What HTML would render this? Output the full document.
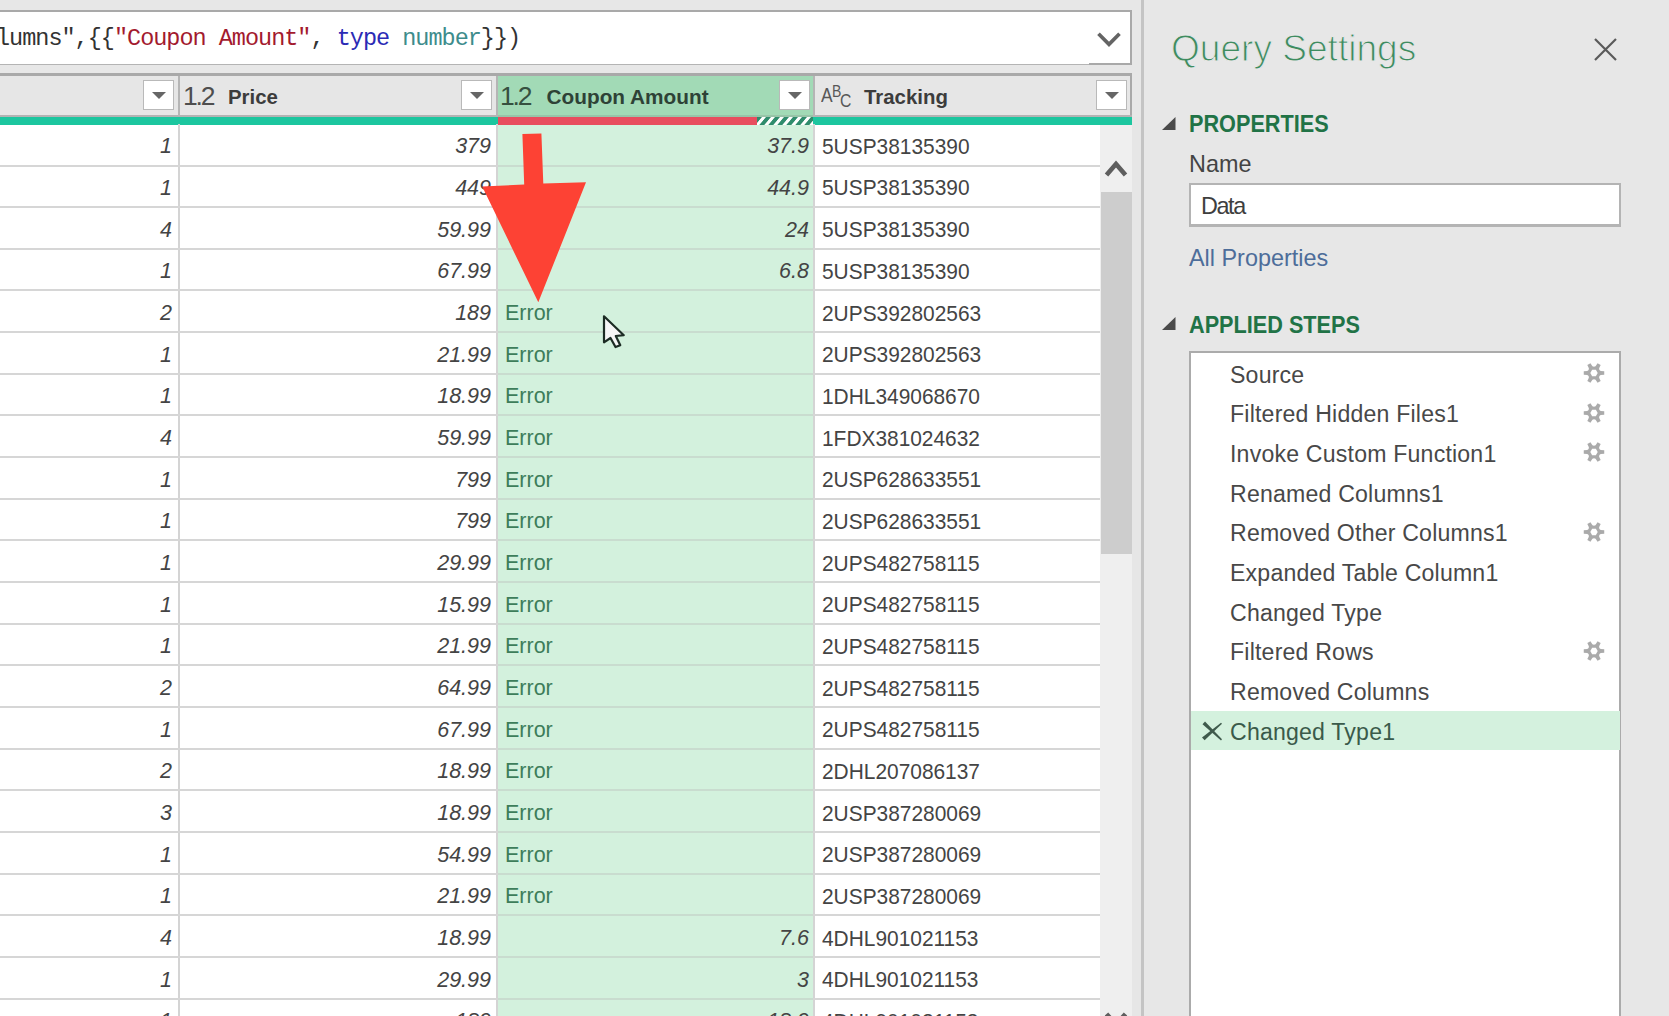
<!DOCTYPE html>
<html><head><meta charset="utf-8">
<style>
html,body{margin:0;padding:0;}
body{width:1669px;height:1016px;overflow:hidden;position:relative;background:#e7e7e7;font-family:"Liberation Sans",sans-serif;}
.a{position:absolute;}
.t{position:absolute;white-space:pre;line-height:1;}
.num{font-style:italic;color:#444;text-align:right;}
.trk{color:#444;}
.err{color:#3d7d5a;}
.hl{position:absolute;height:2px;background:#d6d6d6;}
.step{position:absolute;left:1230px;white-space:pre;line-height:1;font-size:23.1px;letter-spacing:0.2px;color:#484848;}
</style></head><body>

<div class="a" style="left:0;top:10px;width:1132px;height:2px;background:#a9a9a9"></div>
<div class="a" style="left:0;top:12px;width:1130px;height:52px;background:#fff"></div>
<div class="a" style="left:1130px;top:10px;width:2px;height:55px;background:#a9a9a9"></div>
<div class="a" style="left:0;top:64px;width:1089px;height:1px;background:#b4b4b4"></div>
<div class="a" style="left:1089px;top:63px;width:43px;height:2px;background:#a9a9a9"></div>
<div class="t" style="left:-4px;top:27.41px;font-family:'Liberation Mono',monospace;font-size:23.5px;letter-spacing:-1.000px"><span style="color:#333">lumns",{{</span><span style="color:#a31a2e">"Coupon Amount"</span><span style="color:#333">, </span><span style="color:#2b2bb5">type</span><span style="color:#333"> </span><span style="color:#3d8c8c">number</span><span style="color:#333">}})</span></div>
<svg class="a" style="left:1090px;top:25px" width="36" height="30"><polyline points="8.5,8.8 19,19.3 29.5,8.8" fill="none" stroke="#646464" stroke-width="3.7"/></svg>
<div class="a" style="left:0;top:73px;width:1132px;height:3px;background:#a9a9a9"></div>
<div class="a" style="left:0;top:76px;width:1130px;height:39px;background:#e6e6e6"></div>
<div class="a" style="left:1130px;top:73px;width:2px;height:44px;background:#a9a9a9"></div>
<div class="a" style="left:498px;top:76px;width:315px;height:39px;background:#a2dab6"></div>
<div class="a" style="left:0;top:114.6px;width:1132px;height:2px;background:#b3b3b3"></div>
<div class="a" style="left:498px;top:114.6px;width:315px;height:2px;background:#98c4a8"></div>
<div class="a" style="left:178px;top:76px;width:2px;height:40px;background:#b5b5b5"></div>
<div class="a" style="left:496px;top:76px;width:2px;height:40px;background:#b5b5b5"></div>
<div class="a" style="left:813px;top:76px;width:2px;height:40px;background:#b5b5b5"></div>
<div class="a" style="left:0;top:116.6px;width:1132px;height:8px;background:#1cc69f"></div>
<div class="a" style="left:498px;top:116.6px;width:259px;height:8px;background:#e84d5e"></div>
<svg class="a" style="left:757px;top:116.6px" width="56" height="8"><defs><pattern id="st" width="9" height="9" patternUnits="userSpaceOnUse" patternTransform="skewX(-40)"><rect width="9" height="9" fill="#2f8c6c"/><rect x="5" width="4" height="9" fill="#fff"/></pattern></defs><rect width="56" height="9" fill="url(#st)"/></svg>
<div class="a" style="left:143.3px;top:79.8px;width:28.6px;height:28.6px;border:1.6px solid #b9b9b9;background:#fff"></div>
<svg class="a" style="left:143px;top:80px" width="32" height="32"><polygon points="9,12 23,12 16,19" fill="#666"/></svg>
<div class="a" style="left:461.3px;top:79.8px;width:28.6px;height:28.6px;border:1.6px solid #b9b9b9;background:#fff"></div>
<svg class="a" style="left:461px;top:80px" width="32" height="32"><polygon points="9,12 23,12 16,19" fill="#666"/></svg>
<div class="a" style="left:779.3px;top:79.8px;width:28.6px;height:28.6px;border:1.6px solid #b9b9b9;background:#fff"></div>
<svg class="a" style="left:779px;top:80px" width="32" height="32"><polygon points="9,12 23,12 16,19" fill="#666"/></svg>
<div class="a" style="left:1096.3px;top:79.8px;width:28.6px;height:28.6px;border:1.6px solid #b9b9b9;background:#fff"></div>
<svg class="a" style="left:1096px;top:80px" width="32" height="32"><polygon points="9,12 23,12 16,19" fill="#666"/></svg>
<div class="t" style="left:183px;top:82.57px;font-size:26.5px;color:#4e4e4e;letter-spacing:-2.2px">1.2</div>
<div class="t" style="left:228px;top:87.23px;font-size:20.4px;font-weight:bold;color:#3c3c3c">Price</div>
<div class="t" style="left:500px;top:82.57px;font-size:26.5px;color:#36503f;letter-spacing:-2.2px">1.2</div>
<div class="t" style="left:546.5px;top:86.89px;font-size:20.8px;font-weight:bold;color:#2e4236">Coupon Amount</div>
<div class="t" style="left:820.5px;top:84.7px;font-size:20.5px;color:#575757;transform:scaleX(0.85);transform-origin:0 0">A</div>
<div class="t" style="left:831.5px;top:82.7px;font-size:16.5px;color:#575757;transform:scaleX(0.85);transform-origin:0 0">B</div>
<div class="t" style="left:839.5px;top:91.8px;font-size:18.5px;color:#575757;transform:scaleX(0.85);transform-origin:0 0">C</div>
<div class="t" style="left:864px;top:87.23px;font-size:20.4px;font-weight:bold;color:#3c3c3c">Tracking</div>
<div class="a" style="left:0;top:124.5px;width:1100px;height:892px;background:#fff"></div>
<div class="a" style="left:498px;top:124.5px;width:315px;height:892px;background:#d3f1dd"></div>
<div class="a" style="left:178px;top:124px;width:2px;height:892px;background:#d4d4d4"></div>
<div class="a" style="left:496px;top:124px;width:2px;height:892px;background:#d4d4d4"></div>
<div class="a" style="left:813px;top:124px;width:2px;height:892px;background:#d4d4d4"></div>
<div class="hl" style="left:0;top:164.50px;width:1100px"></div>
<div class="hl" style="left:498px;top:164.50px;width:315px;background:#c9dccf"></div>
<div class="hl" style="left:0;top:206.15px;width:1100px"></div>
<div class="hl" style="left:498px;top:206.15px;width:315px;background:#c9dccf"></div>
<div class="hl" style="left:0;top:247.80px;width:1100px"></div>
<div class="hl" style="left:498px;top:247.80px;width:315px;background:#c9dccf"></div>
<div class="hl" style="left:0;top:289.45px;width:1100px"></div>
<div class="hl" style="left:498px;top:289.45px;width:315px;background:#c9dccf"></div>
<div class="hl" style="left:0;top:331.10px;width:1100px"></div>
<div class="hl" style="left:498px;top:331.10px;width:315px;background:#c9dccf"></div>
<div class="hl" style="left:0;top:372.75px;width:1100px"></div>
<div class="hl" style="left:498px;top:372.75px;width:315px;background:#c9dccf"></div>
<div class="hl" style="left:0;top:414.40px;width:1100px"></div>
<div class="hl" style="left:498px;top:414.40px;width:315px;background:#c9dccf"></div>
<div class="hl" style="left:0;top:456.05px;width:1100px"></div>
<div class="hl" style="left:498px;top:456.05px;width:315px;background:#c9dccf"></div>
<div class="hl" style="left:0;top:497.70px;width:1100px"></div>
<div class="hl" style="left:498px;top:497.70px;width:315px;background:#c9dccf"></div>
<div class="hl" style="left:0;top:539.35px;width:1100px"></div>
<div class="hl" style="left:498px;top:539.35px;width:315px;background:#c9dccf"></div>
<div class="hl" style="left:0;top:581.00px;width:1100px"></div>
<div class="hl" style="left:498px;top:581.00px;width:315px;background:#c9dccf"></div>
<div class="hl" style="left:0;top:622.65px;width:1100px"></div>
<div class="hl" style="left:498px;top:622.65px;width:315px;background:#c9dccf"></div>
<div class="hl" style="left:0;top:664.30px;width:1100px"></div>
<div class="hl" style="left:498px;top:664.30px;width:315px;background:#c9dccf"></div>
<div class="hl" style="left:0;top:705.95px;width:1100px"></div>
<div class="hl" style="left:498px;top:705.95px;width:315px;background:#c9dccf"></div>
<div class="hl" style="left:0;top:747.60px;width:1100px"></div>
<div class="hl" style="left:498px;top:747.60px;width:315px;background:#c9dccf"></div>
<div class="hl" style="left:0;top:789.25px;width:1100px"></div>
<div class="hl" style="left:498px;top:789.25px;width:315px;background:#c9dccf"></div>
<div class="hl" style="left:0;top:830.90px;width:1100px"></div>
<div class="hl" style="left:498px;top:830.90px;width:315px;background:#c9dccf"></div>
<div class="hl" style="left:0;top:872.55px;width:1100px"></div>
<div class="hl" style="left:498px;top:872.55px;width:315px;background:#c9dccf"></div>
<div class="hl" style="left:0;top:914.20px;width:1100px"></div>
<div class="hl" style="left:498px;top:914.20px;width:315px;background:#c9dccf"></div>
<div class="hl" style="left:0;top:955.85px;width:1100px"></div>
<div class="hl" style="left:498px;top:955.85px;width:315px;background:#c9dccf"></div>
<div class="hl" style="left:0;top:997.50px;width:1100px"></div>
<div class="hl" style="left:498px;top:997.50px;width:315px;background:#c9dccf"></div>
<div class="t num" style="right:1497px;top:136.30px;font-size:21.5px">1</div>
<div class="t num" style="right:1178px;top:136.30px;font-size:21.5px">379</div>
<div class="t num" style="right:860px;top:136.30px;font-size:21.5px">37.9</div>
<div class="t trk" style="left:822px;top:136.81px;font-size:20.9px;transform:scaleY(1.05);transform-origin:0 17.69px">5USP38135390</div>
<div class="t num" style="right:1497px;top:177.98px;font-size:21.5px">1</div>
<div class="t num" style="right:1178px;top:177.98px;font-size:21.5px">449</div>
<div class="t num" style="right:860px;top:177.98px;font-size:21.5px">44.9</div>
<div class="t trk" style="left:822px;top:178.48px;font-size:20.9px;transform:scaleY(1.05);transform-origin:0 17.69px">5USP38135390</div>
<div class="t num" style="right:1497px;top:219.65px;font-size:21.5px">4</div>
<div class="t num" style="right:1178px;top:219.65px;font-size:21.5px">59.99</div>
<div class="t num" style="right:860px;top:219.65px;font-size:21.5px">24</div>
<div class="t trk" style="left:822px;top:220.16px;font-size:20.9px;transform:scaleY(1.05);transform-origin:0 17.69px">5USP38135390</div>
<div class="t num" style="right:1497px;top:261.33px;font-size:21.5px">1</div>
<div class="t num" style="right:1178px;top:261.33px;font-size:21.5px">67.99</div>
<div class="t num" style="right:860px;top:261.33px;font-size:21.5px">6.8</div>
<div class="t trk" style="left:822px;top:261.83px;font-size:20.9px;transform:scaleY(1.05);transform-origin:0 17.69px">5USP38135390</div>
<div class="t num" style="right:1497px;top:303.00px;font-size:21.5px">2</div>
<div class="t num" style="right:1178px;top:303.00px;font-size:21.5px">189</div>
<div class="t err" style="left:505px;top:303.00px;font-size:21.5px">Error</div>
<div class="t trk" style="left:822px;top:303.51px;font-size:20.9px;transform:scaleY(1.05);transform-origin:0 17.69px">2UPS392802563</div>
<div class="t num" style="right:1497px;top:344.68px;font-size:21.5px">1</div>
<div class="t num" style="right:1178px;top:344.68px;font-size:21.5px">21.99</div>
<div class="t err" style="left:505px;top:344.68px;font-size:21.5px">Error</div>
<div class="t trk" style="left:822px;top:345.18px;font-size:20.9px;transform:scaleY(1.05);transform-origin:0 17.69px">2UPS392802563</div>
<div class="t num" style="right:1497px;top:386.35px;font-size:21.5px">1</div>
<div class="t num" style="right:1178px;top:386.35px;font-size:21.5px">18.99</div>
<div class="t err" style="left:505px;top:386.35px;font-size:21.5px">Error</div>
<div class="t trk" style="left:822px;top:386.86px;font-size:20.9px;transform:scaleY(1.05);transform-origin:0 17.69px">1DHL349068670</div>
<div class="t num" style="right:1497px;top:428.03px;font-size:21.5px">4</div>
<div class="t num" style="right:1178px;top:428.03px;font-size:21.5px">59.99</div>
<div class="t err" style="left:505px;top:428.03px;font-size:21.5px">Error</div>
<div class="t trk" style="left:822px;top:428.53px;font-size:20.9px;transform:scaleY(1.05);transform-origin:0 17.69px">1FDX381024632</div>
<div class="t num" style="right:1497px;top:469.70px;font-size:21.5px">1</div>
<div class="t num" style="right:1178px;top:469.70px;font-size:21.5px">799</div>
<div class="t err" style="left:505px;top:469.70px;font-size:21.5px">Error</div>
<div class="t trk" style="left:822px;top:470.21px;font-size:20.9px;transform:scaleY(1.05);transform-origin:0 17.69px">2USP628633551</div>
<div class="t num" style="right:1497px;top:511.38px;font-size:21.5px">1</div>
<div class="t num" style="right:1178px;top:511.38px;font-size:21.5px">799</div>
<div class="t err" style="left:505px;top:511.38px;font-size:21.5px">Error</div>
<div class="t trk" style="left:822px;top:511.88px;font-size:20.9px;transform:scaleY(1.05);transform-origin:0 17.69px">2USP628633551</div>
<div class="t num" style="right:1497px;top:553.05px;font-size:21.5px">1</div>
<div class="t num" style="right:1178px;top:553.05px;font-size:21.5px">29.99</div>
<div class="t err" style="left:505px;top:553.05px;font-size:21.5px">Error</div>
<div class="t trk" style="left:822px;top:553.56px;font-size:20.9px;transform:scaleY(1.05);transform-origin:0 17.69px">2UPS482758115</div>
<div class="t num" style="right:1497px;top:594.73px;font-size:21.5px">1</div>
<div class="t num" style="right:1178px;top:594.73px;font-size:21.5px">15.99</div>
<div class="t err" style="left:505px;top:594.73px;font-size:21.5px">Error</div>
<div class="t trk" style="left:822px;top:595.23px;font-size:20.9px;transform:scaleY(1.05);transform-origin:0 17.69px">2UPS482758115</div>
<div class="t num" style="right:1497px;top:636.40px;font-size:21.5px">1</div>
<div class="t num" style="right:1178px;top:636.40px;font-size:21.5px">21.99</div>
<div class="t err" style="left:505px;top:636.40px;font-size:21.5px">Error</div>
<div class="t trk" style="left:822px;top:636.91px;font-size:20.9px;transform:scaleY(1.05);transform-origin:0 17.69px">2UPS482758115</div>
<div class="t num" style="right:1497px;top:678.08px;font-size:21.5px">2</div>
<div class="t num" style="right:1178px;top:678.08px;font-size:21.5px">64.99</div>
<div class="t err" style="left:505px;top:678.08px;font-size:21.5px">Error</div>
<div class="t trk" style="left:822px;top:678.58px;font-size:20.9px;transform:scaleY(1.05);transform-origin:0 17.69px">2UPS482758115</div>
<div class="t num" style="right:1497px;top:719.75px;font-size:21.5px">1</div>
<div class="t num" style="right:1178px;top:719.75px;font-size:21.5px">67.99</div>
<div class="t err" style="left:505px;top:719.75px;font-size:21.5px">Error</div>
<div class="t trk" style="left:822px;top:720.26px;font-size:20.9px;transform:scaleY(1.05);transform-origin:0 17.69px">2UPS482758115</div>
<div class="t num" style="right:1497px;top:761.43px;font-size:21.5px">2</div>
<div class="t num" style="right:1178px;top:761.43px;font-size:21.5px">18.99</div>
<div class="t err" style="left:505px;top:761.43px;font-size:21.5px">Error</div>
<div class="t trk" style="left:822px;top:761.93px;font-size:20.9px;transform:scaleY(1.05);transform-origin:0 17.69px">2DHL207086137</div>
<div class="t num" style="right:1497px;top:803.10px;font-size:21.5px">3</div>
<div class="t num" style="right:1178px;top:803.10px;font-size:21.5px">18.99</div>
<div class="t err" style="left:505px;top:803.10px;font-size:21.5px">Error</div>
<div class="t trk" style="left:822px;top:803.61px;font-size:20.9px;transform:scaleY(1.05);transform-origin:0 17.69px">2USP387280069</div>
<div class="t num" style="right:1497px;top:844.78px;font-size:21.5px">1</div>
<div class="t num" style="right:1178px;top:844.78px;font-size:21.5px">54.99</div>
<div class="t err" style="left:505px;top:844.78px;font-size:21.5px">Error</div>
<div class="t trk" style="left:822px;top:845.28px;font-size:20.9px;transform:scaleY(1.05);transform-origin:0 17.69px">2USP387280069</div>
<div class="t num" style="right:1497px;top:886.45px;font-size:21.5px">1</div>
<div class="t num" style="right:1178px;top:886.45px;font-size:21.5px">21.99</div>
<div class="t err" style="left:505px;top:886.45px;font-size:21.5px">Error</div>
<div class="t trk" style="left:822px;top:886.96px;font-size:20.9px;transform:scaleY(1.05);transform-origin:0 17.69px">2USP387280069</div>
<div class="t num" style="right:1497px;top:928.13px;font-size:21.5px">4</div>
<div class="t num" style="right:1178px;top:928.13px;font-size:21.5px">18.99</div>
<div class="t num" style="right:860px;top:928.13px;font-size:21.5px">7.6</div>
<div class="t trk" style="left:822px;top:928.63px;font-size:20.9px;transform:scaleY(1.05);transform-origin:0 17.69px">4DHL901021153</div>
<div class="t num" style="right:1497px;top:969.80px;font-size:21.5px">1</div>
<div class="t num" style="right:1178px;top:969.80px;font-size:21.5px">29.99</div>
<div class="t num" style="right:860px;top:969.80px;font-size:21.5px">3</div>
<div class="t trk" style="left:822px;top:970.31px;font-size:20.9px;transform:scaleY(1.05);transform-origin:0 17.69px">4DHL901021153</div>
<div class="t num" style="right:1497px;top:1011.48px;font-size:21.5px">1</div>
<div class="t num" style="right:1178px;top:1011.48px;font-size:21.5px">189</div>
<div class="t num" style="right:860px;top:1011.48px;font-size:21.5px">18.9</div>
<div class="t trk" style="left:822px;top:1011.98px;font-size:20.9px;transform:scaleY(1.05);transform-origin:0 17.69px">4DHL901021153</div>
<div class="a" style="left:1100px;top:124.5px;width:33.5px;height:892px;background:#efefef"></div>
<div class="a" style="left:1101px;top:192px;width:30.5px;height:361.5px;background:#cdcdcd"></div>
<svg class="a" style="left:1100px;top:150px" width="32" height="32"><polyline points="6.5,25 16,14 25.5,25" fill="none" stroke="#5e5e5e" stroke-width="4.6"/></svg>
<svg class="a" style="left:1100px;top:1006px" width="32" height="32"><polyline points="6.5,8 16,18.5 25.5,8" fill="none" stroke="#5e5e5e" stroke-width="4.6"/></svg>
<div class="a" style="left:1132px;top:117px;width:9px;height:899px;background:#e6e6e6"></div>
<div class="a" style="left:1141px;top:0;width:3px;height:1016px;background:#c4c4c4"></div>
<svg class="a" style="left:0;top:0" width="1669" height="1016"><polygon points="522.4,134 541.4,133.5 543.3,183.6 586,182.3 538.3,302.3 482.2,186.4 524.2,184.5" fill="#fd4234"/></svg>
<svg class="a" style="left:0;top:0" width="700" height="400"><path d="M604,316.3 L604,342.3 L610.5,338 L615.5,347 L620.3,345.2 L615.8,336 L623.8,335.2 Z" fill="#f6f6f6" stroke="#1c2c24" stroke-width="2.2" stroke-linejoin="round"/></svg>
<div class="t" style="left:1171px;top:29.79px;font-size:37.1px;color:#3f8c60;-webkit-text-stroke:1.05px #e7e7e7">Query Settings</div>
<svg class="a" style="left:1590px;top:35px" width="30" height="30"><path d="M5,4 L26,25 M26,4 L5,25" stroke="#5a5a5a" stroke-width="2.2"/></svg>
<svg class="a" style="left:1160px;top:115px" width="18" height="18"><polygon points="2,15 15.5,15 15.5,2" fill="#4a4a4a"/></svg>
<div class="t" style="left:1188.5px;top:113.08px;font-size:23.3px;font-weight:bold;color:#217346;transform:scaleX(0.93);transform-origin:0 0">PROPERTIES</div>
<div class="t" style="left:1189px;top:152.69px;font-size:23.4px;color:#444">Name</div>
<div class="a" style="left:1189px;top:183px;width:428px;height:39px;border:2px solid #b4b4b4;border-bottom-width:3px;background:#fff"></div>
<div class="t" style="left:1201px;top:194.99px;font-size:23.4px;color:#3e3e3e;letter-spacing:-1.4px">Data</div>
<div class="t" style="left:1189px;top:246.59px;font-size:23.4px;color:#4d6d9a">All Properties</div>
<svg class="a" style="left:1160px;top:315px" width="18" height="18"><polygon points="2,15 15.5,15 15.5,2" fill="#4a4a4a"/></svg>
<div class="t" style="left:1188.5px;top:314.28px;font-size:23.3px;font-weight:bold;color:#217346;transform:scaleX(0.93);transform-origin:0 0">APPLIED STEPS</div>
<div class="a" style="left:1189px;top:351px;width:428px;height:700px;border:2.5px solid #ababab;background:#fff"></div>
<div class="a" style="left:1191px;top:711px;width:429px;height:39px;background:#d4f1de"></div>
<div class="step" style="top:363.75px">Source</div>
<svg class="a" style="left:1581.5px;top:360.9px" width="24" height="24" viewBox="-12 -12 24 24"><path d="M5.37,-3.10 L6.69,-2.05 L10.24,-1.81 L10.24,1.81 L6.69,2.05 L5.37,3.10 L5.12,4.77 L6.68,7.97 L3.56,9.77 L1.57,6.82 L0.00,6.20 L-1.57,6.82 L-3.56,9.77 L-6.68,7.97 L-5.12,4.77 L-5.37,3.10 L-6.69,2.05 L-10.24,1.81 L-10.24,-1.81 L-6.69,-2.05 L-5.37,-3.10 L-5.12,-4.77 L-6.68,-7.97 L-3.56,-9.77 L-1.57,-6.82 L-0.00,-6.20 L1.57,-6.82 L3.56,-9.77 L6.68,-7.97 L5.12,-4.77 Z M3.70,0.00 L1.85,3.20 L-1.85,3.20 L-3.70,0.00 L-1.85,-3.20 L1.85,-3.20 Z" fill="#aaa" fill-rule="evenodd"/></svg>
<div class="step" style="top:403.41px">Filtered Hidden Files1</div>
<svg class="a" style="left:1581.5px;top:400.55999999999995px" width="24" height="24" viewBox="-12 -12 24 24"><path d="M5.37,-3.10 L6.69,-2.05 L10.24,-1.81 L10.24,1.81 L6.69,2.05 L5.37,3.10 L5.12,4.77 L6.68,7.97 L3.56,9.77 L1.57,6.82 L0.00,6.20 L-1.57,6.82 L-3.56,9.77 L-6.68,7.97 L-5.12,4.77 L-5.37,3.10 L-6.69,2.05 L-10.24,1.81 L-10.24,-1.81 L-6.69,-2.05 L-5.37,-3.10 L-5.12,-4.77 L-6.68,-7.97 L-3.56,-9.77 L-1.57,-6.82 L-0.00,-6.20 L1.57,-6.82 L3.56,-9.77 L6.68,-7.97 L5.12,-4.77 Z M3.70,0.00 L1.85,3.20 L-1.85,3.20 L-3.70,0.00 L-1.85,-3.20 L1.85,-3.20 Z" fill="#aaa" fill-rule="evenodd"/></svg>
<div class="step" style="top:443.07px">Invoke Custom Function1</div>
<svg class="a" style="left:1581.5px;top:440.21999999999997px" width="24" height="24" viewBox="-12 -12 24 24"><path d="M5.37,-3.10 L6.69,-2.05 L10.24,-1.81 L10.24,1.81 L6.69,2.05 L5.37,3.10 L5.12,4.77 L6.68,7.97 L3.56,9.77 L1.57,6.82 L0.00,6.20 L-1.57,6.82 L-3.56,9.77 L-6.68,7.97 L-5.12,4.77 L-5.37,3.10 L-6.69,2.05 L-10.24,1.81 L-10.24,-1.81 L-6.69,-2.05 L-5.37,-3.10 L-5.12,-4.77 L-6.68,-7.97 L-3.56,-9.77 L-1.57,-6.82 L-0.00,-6.20 L1.57,-6.82 L3.56,-9.77 L6.68,-7.97 L5.12,-4.77 Z M3.70,0.00 L1.85,3.20 L-1.85,3.20 L-3.70,0.00 L-1.85,-3.20 L1.85,-3.20 Z" fill="#aaa" fill-rule="evenodd"/></svg>
<div class="step" style="top:482.73px">Renamed Columns1</div>
<div class="step" style="top:522.39px">Removed Other Columns1</div>
<svg class="a" style="left:1581.5px;top:519.54px" width="24" height="24" viewBox="-12 -12 24 24"><path d="M5.37,-3.10 L6.69,-2.05 L10.24,-1.81 L10.24,1.81 L6.69,2.05 L5.37,3.10 L5.12,4.77 L6.68,7.97 L3.56,9.77 L1.57,6.82 L0.00,6.20 L-1.57,6.82 L-3.56,9.77 L-6.68,7.97 L-5.12,4.77 L-5.37,3.10 L-6.69,2.05 L-10.24,1.81 L-10.24,-1.81 L-6.69,-2.05 L-5.37,-3.10 L-5.12,-4.77 L-6.68,-7.97 L-3.56,-9.77 L-1.57,-6.82 L-0.00,-6.20 L1.57,-6.82 L3.56,-9.77 L6.68,-7.97 L5.12,-4.77 Z M3.70,0.00 L1.85,3.20 L-1.85,3.20 L-3.70,0.00 L-1.85,-3.20 L1.85,-3.20 Z" fill="#aaa" fill-rule="evenodd"/></svg>
<div class="step" style="top:562.05px">Expanded Table Column1</div>
<div class="step" style="top:601.71px">Changed Type</div>
<div class="step" style="top:641.37px">Filtered Rows</div>
<svg class="a" style="left:1581.5px;top:638.52px" width="24" height="24" viewBox="-12 -12 24 24"><path d="M5.37,-3.10 L6.69,-2.05 L10.24,-1.81 L10.24,1.81 L6.69,2.05 L5.37,3.10 L5.12,4.77 L6.68,7.97 L3.56,9.77 L1.57,6.82 L0.00,6.20 L-1.57,6.82 L-3.56,9.77 L-6.68,7.97 L-5.12,4.77 L-5.37,3.10 L-6.69,2.05 L-10.24,1.81 L-10.24,-1.81 L-6.69,-2.05 L-5.37,-3.10 L-5.12,-4.77 L-6.68,-7.97 L-3.56,-9.77 L-1.57,-6.82 L-0.00,-6.20 L1.57,-6.82 L3.56,-9.77 L6.68,-7.97 L5.12,-4.77 Z M3.70,0.00 L1.85,3.20 L-1.85,3.20 L-3.70,0.00 L-1.85,-3.20 L1.85,-3.20 Z" fill="#aaa" fill-rule="evenodd"/></svg>
<div class="step" style="top:681.03px">Removed Columns</div>
<div class="step" style="top:720.69px;color:#3a5a4a">Changed Type1</div>
<svg class="a" style="left:0;top:0" width="1669" height="1016"><polygon points="1202.5,724.2 1205,721.5 1222,739.2 1221,740.5" fill="#3f5a4c"/><polygon points="1202,737.5 1204.6,740.3 1222,723.8 1221,722.8" fill="#3f5a4c"/></svg>
</body></html>
